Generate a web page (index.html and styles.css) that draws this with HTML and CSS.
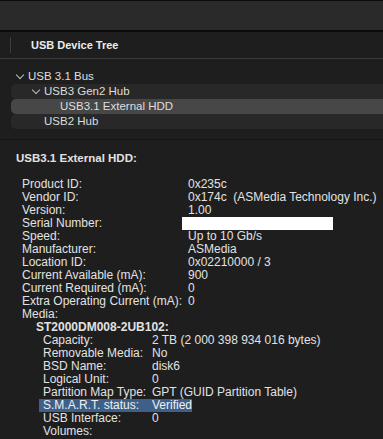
FILE: index.html
```html
<!DOCTYPE html>
<html lang="en">
<head>
	<meta charset="UTF-8">
	<title>System Information - USB</title>
	<link rel="stylesheet" href="styles.css">
</head>
<body>
	<div class="toolbar"></div>
	<div class="tree-head">
		<span class="divider"></span>
		<span class="tree-title">USB Device Tree</span>
	</div>
	<ul class="tree">
		<li class="node lv0"><span class="chev"></span>USB 3.1 Bus</li>
		<li class="node lv1 alt"><span class="chev"></span>USB3 Gen2 Hub</li>
		<li class="node lv2 on">USB3.1 External HDD</li>
		<li class="node lv1 alt">USB2 Hub</li>
	</ul>
	<div class="details">
		<div class="dev-title">USB3.1 External HDD:</div>
		<div class="props">
			<div class="prop"><span>Product ID:</span><span>0x235c</span></div>
			<div class="prop"><span>Vendor ID:</span><span>0x174c&nbsp; (ASMedia Technology Inc.)</span></div>
			<div class="prop"><span>Version:</span><span>1.00</span></div>
			<div class="prop"><span>Serial Number:</span><span class="redact"></span></div>
			<div class="prop"><span>Speed:</span><span>Up to 10 Gb/s</span></div>
			<div class="prop"><span>Manufacturer:</span><span>ASMedia</span></div>
			<div class="prop"><span>Location ID:</span><span>0x02210000 / 3</span></div>
			<div class="prop"><span>Current Available (mA):</span><span>900</span></div>
			<div class="prop"><span>Current Required (mA):</span><span>0</span></div>
			<div class="prop"><span>Extra Operating Current (mA):</span><span>0</span></div>
			<div class="media-label">Media:</div>
			<div class="disk-title">ST2000DM008-2UB102:</div>
			<div class="disk">
				<div class="drow"><span>Capacity:</span><span>2 TB (2 000 398 934 016 bytes)</span></div>
				<div class="drow"><span>Removable Media:</span><span>No</span></div>
				<div class="drow"><span>BSD Name:</span><span>disk6</span></div>
				<div class="drow"><span>Logical Unit:</span><span>0</span></div>
				<div class="drow"><span>Partition Map Type:</span><span>GPT (GUID Partition Table)</span></div>
				<div class="drow sel"><span>S.M.A.R.T. status:</span><span>Verified</span></div>
				<div class="drow"><span>USB Interface:</span><span>0</span></div>
				<div class="drow"><span>Volumes:</span><span></span></div>
			</div>
		</div>
	</div>
</body>
</html>
```

FILE: styles.css
```css
*{
	margin: 0;
	padding: 0;
}
body{
	width: 383px;
	height: 439px;
	overflow: hidden;
	background-color: #1e1e1e;
	color: #dedede;
	font-family: "Liberation Sans", Arial, sans-serif;
	font-size: 11px;
}
.toolbar{
	height: 29px;
	background-color: #2a2a2a;
	border-top: 1px solid #0b0b0b;
	border-bottom: 2px solid #0b0b0b;
}
.tree-head{
	height: 26px;
	display: flex;
	align-items: center;
	border-bottom: 1px solid #3a3a3a;
}
.divider{
	width: 1px;
	height: 16px;
	margin-left: 10px;
	background-color: #3c3c3c;
}
.tree-title{
	margin-left: 20px;
	font-weight: bold;
	color: #ececec;
}
.tree{
	list-style: none;
	padding: 10px 0 10px 0;
	border-bottom: 1px solid #161616;
	font-size: 11.5px;
}
.node{
	height: 15px;
	line-height: 15px;
	margin-left: 11px;
	border-radius: 5px 0 0 5px;
	display: flex;
	align-items: center;
}
.node.alt{
	background-color: #282828;
}
.node.on{
	background-color: #474747;
}
.lv0{
	padding-left: 17px;
}
.lv1{
	padding-left: 33px;
}
.lv2{
	padding-left: 49px;
}
.chev{
	width: 5px;
	height: 5px;
	margin-left: -11px;
	margin-right: 5px;
	margin-top: -4px;
	border-right: 1.2px solid #bdbdbd;
	border-bottom: 1.2px solid #bdbdbd;
	transform: rotate(45deg);
}
.details{
	padding: 12px 0 0 16px;
	line-height: 13px;
	font-size: 12px;
	color: #e2e2e2;
}
.dev-title{
	font-weight: bold;
	font-size: 11.5px;
	margin-bottom: 13px;
}
.props{
	padding-left: 6px;
}
.prop{
	display: grid;
	grid-template-columns: 166px auto;
}
.redact{
	display: block;
	width: 151px;
	height: 13px;
	margin-left: -6px;
	background-color: #fff;
}
.disk-title{
	font-weight: bold;
	padding-left: 14px;
}
.disk{
	padding-left: 21px;
}
.drow{
	display: grid;
	grid-template-columns: 109px auto;
}
.drow.sel{
	width: fit-content;
	margin-left: -4px;
	padding: 0 0 0 4px;
	background-color: #3e6088;
	color: #f0f0f0;
}
```
